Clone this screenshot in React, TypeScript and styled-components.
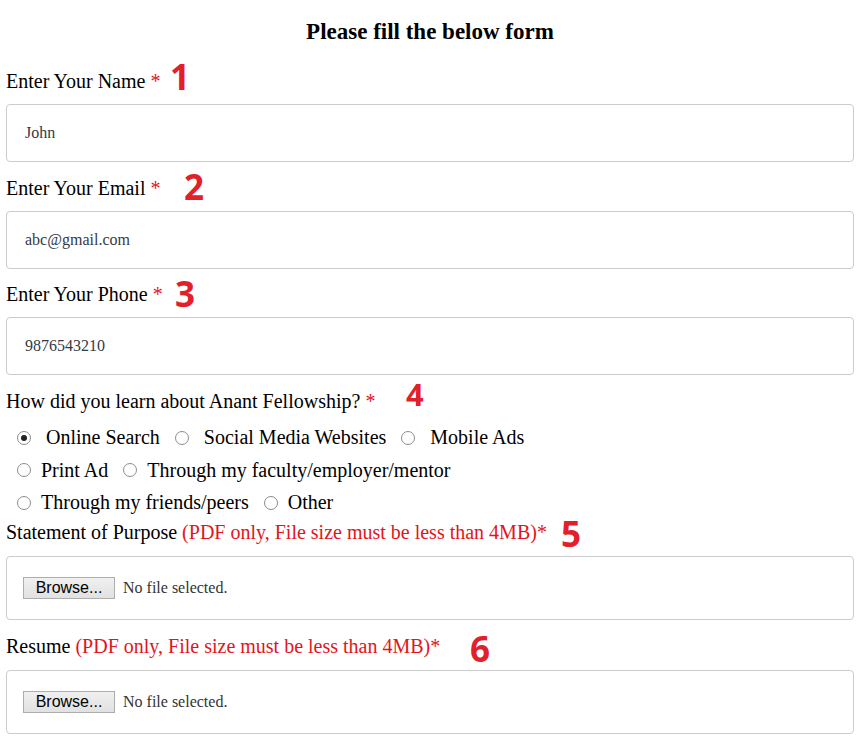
import React, { FC } from "react";
import styled, { createGlobalStyle } from "styled-components";

const GlobalStyle = createGlobalStyle`
  body {
    margin: 0;
    background: #fff;
    font-family: "Liberation Serif", "Times New Roman", serif;
    color: #000;
  }
`;

type Option = { label: string; checked?: boolean };

const sources: Option[][] = [
  [{ label: "Online Search", checked: true }, { label: "Social Media Websites" }, { label: "Mobile Ads" }],
  [{ label: "Print Ad" }, { label: "Through my faculty/employer/mentor" }],
  [{ label: "Through my friends/peers" }, { label: "Other" }],
];

const TextField: FC<{ label: string; value: string; num: string; left: number; drop: number }> = ({
  label,
  value,
  num,
  left,
  drop,
}) => (
  <Field>
    <Label>
      {label} <Req>*</Req>
      <Marker $left={left} $drop={drop} $size={35}>
        {num}
      </Marker>
    </Label>
    <Input>{value}</Input>
  </Field>
);

const FileField: FC<{ title: string; num: string; left: number; drop: number }> = ({ title, num, left, drop }) => (
  <Field>
    <Label>
      {title} <Hint>(PDF only, File size must be less than 4MB)*</Hint>
      <Marker $left={left} $drop={drop} $size={35}>
        {num}
      </Marker>
    </Label>
    <FileBox>
      <BrowseButton type="button">Browse...</BrowseButton>
      <FileName>No file selected.</FileName>
    </FileBox>
  </Field>
);

export default function App() {
  return (
    <Page>
      <GlobalStyle />
      <Title>Please fill the below form</Title>

      <TextField label="Enter Your Name" value="John" num="1" left={164} drop={2} />
      <TextField label="Enter Your Email" value="abc@gmail.com" num="2" left={178} drop={6} />
      <TextField label="Enter Your Phone" value="9876543210" num="3" left={169} drop={6} />

      <Field $after={1}>
        <Label>
          How did you learn about Anant Fellowship? <Req>*</Req>
          <Marker $left={400} $drop={-1} $size={31}>
            4
          </Marker>
        </Label>
        <RadioGroup>
          {sources.map((row, i) => (
            <RadioRow key={i}>
              {row.map(opt => (
                <RadioOption key={opt.label}>
                  <RadioDot $checked={!!opt.checked} $wide={i === 0} />
                  {opt.label}
                </RadioOption>
              ))}
            </RadioRow>
          ))}
        </RadioGroup>
      </Field>

      <FileField title="Statement of Purpose" num="5" left={555} drop={8} />
      <FileField title="Resume" num="6" left={464} drop={10} />
    </Page>
  );
}

const Page = styled.div`
  padding: 18px 2px 0 6px;
  display: flex;
  flex-direction: column;
`;

const Title = styled.div`
  font-size: 23px;
  font-weight: 700;
  line-height: 28px;
  text-align: center;
  margin-bottom: 23px;
`;

const Field = styled.div<{ $after?: number }>`
  display: flex;
  flex-direction: column;
  margin-bottom: ${p => p.$after ?? 13.5}px;
`;

const Label = styled.div`
  position: relative;
  font-size: 20px;
  line-height: 24px;
  white-space: nowrap;
`;

const Req = styled.span`
  color: #e3141b;
`;

const Hint = styled.span`
  color: #e3141b;
`;

// hand-drawn step numbers on top of the screenshot
const Marker = styled.span<{ $left: number; $drop: number; $size: number }>`
  position: absolute;
  left: ${p => p.$left}px;
  top: ${p => 18.6 + p.$drop - 0.888 * p.$size}px;
  font-family: "Open Sans", "Noto Sans", sans-serif;
  font-weight: 700;
  font-size: ${p => p.$size}px;
  line-height: 1;
  color: #e2202a;
`;

const Input = styled.div`
  box-sizing: border-box;
  height: 58px;
  margin-top: 11px;
  padding: 0 18px;
  display: flex;
  align-items: center;
  border: 1px solid #cbcbcb;
  border-radius: 4px;
  font-size: 16px;
  color: #343a46;
`;

const RadioGroup = styled.div`
  margin-top: 9px;
  padding-left: 11px;
  display: flex;
  flex-direction: column;
`;

const RadioRow = styled.div`
  display: flex;
  align-items: center;
  height: 32.5px;
  font-size: 20px;
`;

const RadioOption = styled.label`
  display: flex;
  align-items: center;
  margin-right: 15px;
  white-space: nowrap;
`;

const RadioDot = styled.span<{ $checked: boolean; $wide: boolean }>`
  box-sizing: border-box;
  width: 14px;
  height: 14px;
  margin-right: ${p => (p.$wide ? 15 : 10)}px;
  border: 1px solid #8d8d8d;
  border-radius: 50%;
  background: #fff;
  display: flex;
  align-items: center;
  justify-content: center;

  &::after {
    content: "";
    width: 6px;
    height: 6px;
    border-radius: 50%;
    background: #222;
    display: ${p => (p.$checked ? "block" : "none")};
  }
`;

const FileBox = styled.div`
  box-sizing: border-box;
  height: 64px;
  margin-top: 12px;
  padding: 0 16px;
  display: flex;
  align-items: center;
  border: 1px solid #cbcbcb;
  border-radius: 4px;
`;

const BrowseButton = styled.button`
  box-sizing: border-box;
  width: 92px;
  height: 22px;
  padding: 0;
  border: 1px solid #adadad;
  border-radius: 0;
  background: linear-gradient(#f0f0f0, #e1e1e1);
  font-family: "Liberation Sans", Arial, sans-serif;
  font-size: 16px;
  color: #000;
`;

const FileName = styled.span`
  margin-left: 8px;
  font-size: 16px;
  color: #333;
`;
